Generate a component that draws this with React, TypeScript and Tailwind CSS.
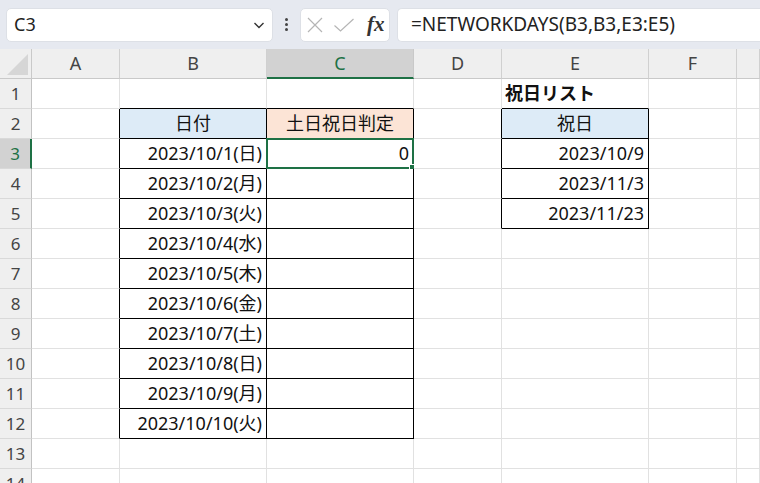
import React from "react";

const FONT = { fontFamily: '"Noto Sans", "Noto Sans CJK JP", sans-serif' };

type Cell = { t?: string; align?: "l" | "c" | "r"; bg?: string; bold?: boolean };

const data: Record<number, Record<string, Cell>> = {
  1: { E: { t: "祝日リスト", align: "l", bold: true } },
  2: {
    B: { t: "日付", align: "c", bg: "bg-[#ddebf7]" },
    C: { t: "土日祝日判定", align: "c", bg: "bg-[#fce4d6]" },
    E: { t: "祝日", align: "c", bg: "bg-[#ddebf7]" },
  },
  3: { B: { t: "2023/10/1(日)", align: "r" }, C: { t: "0", align: "r" }, E: { t: "2023/10/9", align: "r" } },
  4: { B: { t: "2023/10/2(月)", align: "r" }, E: { t: "2023/11/3", align: "r" } },
  5: { B: { t: "2023/10/3(火)", align: "r" }, E: { t: "2023/11/23", align: "r" } },
  6: { B: { t: "2023/10/4(水)", align: "r" } },
  7: { B: { t: "2023/10/5(木)", align: "r" } },
  8: { B: { t: "2023/10/6(金)", align: "r" } },
  9: { B: { t: "2023/10/7(土)", align: "r" } },
  10: { B: { t: "2023/10/8(日)", align: "r" } },
  11: { B: { t: "2023/10/9(月)", align: "r" } },
  12: { B: { t: "2023/10/10(火)", align: "r" } },
};

const COLS = ["A", "B", "C", "D", "E", "F", "G"];
const ROWS = Array.from({ length: 14 }, (_, i) => i + 1);

function rightBlack(r: number, c: string) {
  if (["A", "B", "C"].includes(c) && r >= 2 && r <= 12) return true;
  if (["D", "E"].includes(c) && r >= 2 && r <= 5) return true;
  return false;
}
function bottomBlack(r: number, c: string) {
  if (["B", "C"].includes(c) && r >= 1 && r <= 12) return true;
  if (c === "E" && r >= 1 && r <= 5) return true;
  return false;
}

export default function App() {
  return (
    <div className="w-[760px] h-[483px] overflow-hidden bg-white text-[#111]" style={FONT}>
      {/* formula bar */}
      <div className="h-[49px] bg-[#e6e9f0] flex items-center pl-[6px] gap-0">
        <div className="w-[267px] h-[34px] bg-white rounded-[5px] border border-[#dde0e6] flex items-center justify-between pl-[7px] pr-[6px]">
          <span className="text-[18px] text-[#222]">C3</span>
          <svg width="14" height="14" viewBox="0 0 14 14" fill="none">
            <path d="M2.5 5 L7 9.5 L11.5 5" stroke="#333" strokeWidth="1.4" />
          </svg>
        </div>
        <div className="w-[27px] flex flex-col items-center gap-[2px]">
          <span className="w-[3px] h-[3px] bg-[#444] rounded-full" />
          <span className="w-[3px] h-[3px] bg-[#444] rounded-full" />
          <span className="w-[3px] h-[3px] bg-[#444] rounded-full" />
        </div>
        <div className="w-[90px] h-[34px] bg-white rounded-[5px] border border-[#dde0e6] flex items-center pl-[5px]">
          <svg width="18" height="18" viewBox="0 0 18 18" fill="none">
            <path d="M2 2 L16 16 M16 2 L2 16" stroke="#b5b5b5" strokeWidth="1.2" />
          </svg>
          <svg className="ml-[9px]" width="22" height="18" viewBox="0 0 22 18" fill="none">
            <path d="M1.5 9.5 L7.5 15 L20.5 3" stroke="#b5b5b5" strokeWidth="1.2" />
          </svg>
          <span
            className="ml-[12px] text-[21px] italic font-bold text-[#333] leading-none"
            style={{ fontFamily: '"Liberation Serif", "DejaVu Serif", serif' }}
          >
            fx
          </span>
        </div>
        <div className="ml-[7px] flex-1 h-[34px] bg-white rounded-l-[5px] border border-r-0 border-[#dde0e6] flex items-center pl-[13px]">
          <span className="text-[19px] text-[#222]">=NETWORKDAYS(B3,B3,E3:E5)</span>
        </div>
      </div>

      {/* grid */}
      <div className="grid grid-cols-[32px_88px_147px_147px_88px_147px_88px_1fr] auto-rows-[30px] text-[18px]">
        {/* header row */}
        <div className="bg-[#efefef] border-r border-b border-[#c9c9c9] relative">
          <svg className="absolute left-[7px] top-[5px]" width="21" height="21" viewBox="0 0 21 21">
            <path d="M21 0 L21 21 L0 21 Z" fill="#d6d6d6" />
          </svg>
        </div>
        {COLS.map((c) =>
          c === "C" ? (
            <div
              key={c}
              className="bg-[#d2d2d2] border-r border-[#c9c9c9] border-b-2 border-b-[#1e7145] flex items-center justify-center text-[#1e7145] text-[18px]"
            >
              {c}
            </div>
          ) : (
            <div
              key={c}
              className="bg-[#efefef] border-r border-b border-[#d0d0d0] border-b-[#c9c9c9] flex items-center justify-center text-[#444] text-[18px]"
            >
              {c === "G" ? "" : c}
            </div>
          )
        )}

        {ROWS.map((r) => (
          <React.Fragment key={r}>
            {r === 3 ? (
              <div className="bg-[#d2d2d2] border-b border-[#d9d9d9] border-r-2 border-r-[#1e7145] flex items-center justify-center text-[#1e7145] text-[17px]">
                {r}
              </div>
            ) : (
              <div className="bg-[#efefef] border-b border-[#d9d9d9] border-r border-r-[#c2c2c2] flex items-center justify-center text-[#444] text-[17px]">
                {r}
              </div>
            )}
            {COLS.map((c) => {
              const cell = data[r]?.[c];
              const rb = rightBlack(r, c) ? "border-r-black" : "border-r-[#e1e1e1]";
              const bb = bottomBlack(r, c) ? "border-b-black" : "border-b-[#e1e1e1]";
              const al =
                cell?.align === "c"
                  ? "justify-center"
                  : cell?.align === "r"
                  ? "justify-end pr-[4px]"
                  : "justify-start pl-[3px]";
              const selected = r === 3 && c === "C";
              return (
                <div
                  key={c}
                  className={`relative border-r border-b ${rb} ${bb} ${cell?.bg ?? "bg-white"} flex items-center ${al} whitespace-nowrap`}
                >
                  {cell?.t && <span className={cell.bold ? "font-bold" : ""}>{cell.t}</span>}
                  {selected && (
                    <>
                      <div className="absolute left-[-1px] top-[-1px] right-[-1px] bottom-[-1px] border-2 border-[#1e7145] pointer-events-none" />
                      <div className="absolute right-[-4px] bottom-[-4px] w-[6px] h-[6px] bg-[#1e7145] border border-white box-content" />
                    </>
                  )}
                </div>
              );
            })}
          </React.Fragment>
        ))}
      </div>
    </div>
  );
}
